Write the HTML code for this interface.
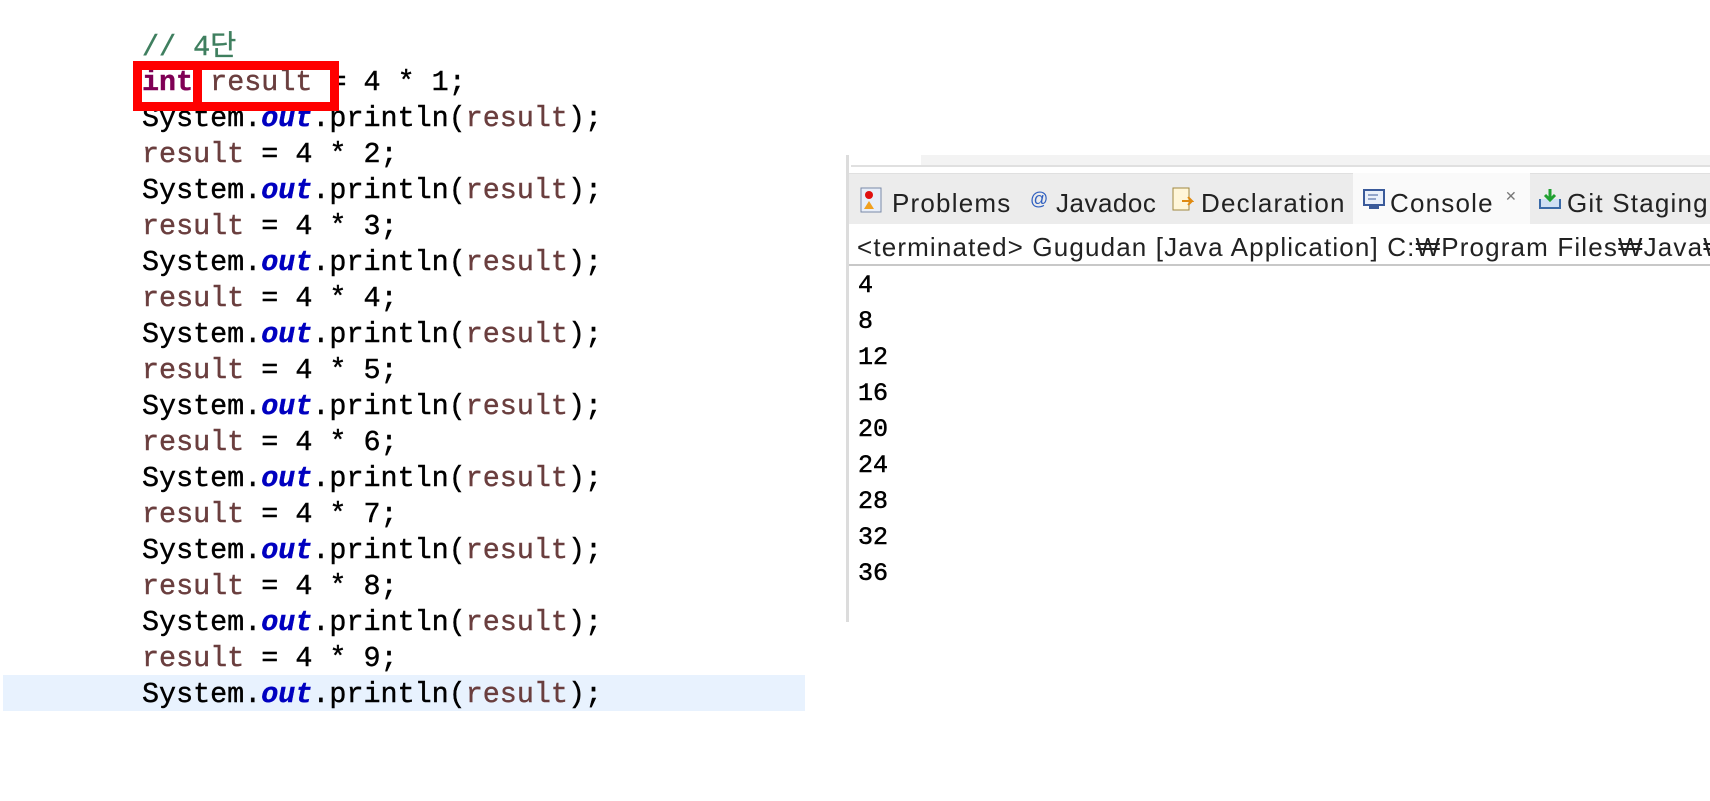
<!DOCTYPE html>
<html><head><meta charset="utf-8"><style>
html,body{margin:0;padding:0;width:1710px;height:801px;background:#fff;overflow:hidden;position:relative}
.code{position:absolute;left:142px;font-family:"Liberation Mono","Noto Sans CJK KR",monospace;font-size:28.4px;line-height:36px;white-space:pre;color:#000;-webkit-text-stroke:0.4px}
.l{position:absolute;left:0;white-space:pre;height:36px}
.c{color:#3f7f5f}.k{color:#7f0055;font-weight:bold}.v{color:#6a3e3e}.o{color:#0000c0;font-style:italic;font-weight:bold}
.hl{position:absolute;left:3px;top:675px;width:802px;height:36px;background:#e8f2fe}
.box{position:absolute;border:9px solid #ff0000;box-sizing:border-box}
.ui{font-family:"Liberation Sans","Noto Sans CJK KR",sans-serif;position:absolute;white-space:pre;color:#222}
.tab{font-size:26px;letter-spacing:1.2px}
</style></head><body>
<div class="hl"></div>
<div class="code" style="top:0">
<div class="l" style="top:30px"><span class="c">// 4단</span></div>
<div class="l" style="top:65px"><span class="k">int</span> <span class="v">result</span> = 4 * 1;</div>
<div class="l" style="top:101px">System.<span class="o">out</span>.println(<span class="v">result</span>);</div>
<div class="l" style="top:137px"><span class="v">result</span> = 4 * 2;</div>
<div class="l" style="top:173px">System.<span class="o">out</span>.println(<span class="v">result</span>);</div>
<div class="l" style="top:209px"><span class="v">result</span> = 4 * 3;</div>
<div class="l" style="top:245px">System.<span class="o">out</span>.println(<span class="v">result</span>);</div>
<div class="l" style="top:281px"><span class="v">result</span> = 4 * 4;</div>
<div class="l" style="top:317px">System.<span class="o">out</span>.println(<span class="v">result</span>);</div>
<div class="l" style="top:353px"><span class="v">result</span> = 4 * 5;</div>
<div class="l" style="top:389px">System.<span class="o">out</span>.println(<span class="v">result</span>);</div>
<div class="l" style="top:425px"><span class="v">result</span> = 4 * 6;</div>
<div class="l" style="top:461px">System.<span class="o">out</span>.println(<span class="v">result</span>);</div>
<div class="l" style="top:497px"><span class="v">result</span> = 4 * 7;</div>
<div class="l" style="top:533px">System.<span class="o">out</span>.println(<span class="v">result</span>);</div>
<div class="l" style="top:569px"><span class="v">result</span> = 4 * 8;</div>
<div class="l" style="top:605px">System.<span class="o">out</span>.println(<span class="v">result</span>);</div>
<div class="l" style="top:641px"><span class="v">result</span> = 4 * 9;</div>
<div class="l" style="top:677px">System.<span class="o">out</span>.println(<span class="v">result</span>);</div>
</div>
<div class="box" style="left:133px;top:61px;width:69px;height:50px"></div>
<div class="box" style="left:193px;top:61px;width:146px;height:50px"></div>

<div style="position:absolute;left:846px;top:155px;width:3px;height:467px;background:#dcdcdc"></div>
<div style="position:absolute;left:851px;top:155px;width:859px;height:10px;background:#f3f3f3;border-bottom:2px solid #e0e0e0"></div>
<div style="position:absolute;left:851px;top:155px;width:70px;height:10px;background:#fff"></div>
<div style="position:absolute;left:849px;top:173px;width:861px;height:51px;background:#ececec;border-top:1px solid #e0e0e0"></div>
<div style="position:absolute;left:1353px;top:173px;width:177px;height:51px;background:#fafafa"></div>
<div style="position:absolute;left:849px;top:224px;width:861px;height:40px;background:#fff;border-bottom:2px solid #c8c8c8"></div>
<svg style="position:absolute;left:860px;top:187px" width="22" height="26"><rect x="1" y="1" width="20" height="24" fill="#e8eef8" stroke="#7a8aa8"/><circle cx="9" cy="8" r="4" fill="#e01010"/><path d="M4 22 L9 14 L14 22Z" fill="#f0a020"/></svg>
<div class="ui" style="left:1030px;top:189px;font-size:18px;color:#3060c0">@</div>
<svg style="position:absolute;left:1172px;top:187px" width="22" height="26"><rect x="1" y="1" width="16" height="22" fill="#fff6d8" stroke="#a08840"/><path d="M10 14 h10 l-4 -4 M20 14 l-4 4" stroke="#e08a10" stroke-width="2" fill="none"/></svg>
<svg style="position:absolute;left:1363px;top:189px" width="22" height="22"><rect x="1" y="1" width="20" height="15" fill="#eaf0fa" stroke="#3a5a9a" stroke-width="2"/><path d="M5 6h10M5 10h8" stroke="#3a5a9a"/><rect x="6" y="17" width="10" height="3" fill="#3a5a9a"/></svg>
<div class="ui" style="left:1505px;top:188px;font-size:14px;color:#777">✕</div>
<svg style="position:absolute;left:1538px;top:187px" width="24" height="24"><path d="M2 12 v9 h20 v-9" stroke="#3a6aa8" stroke-width="2" fill="#cfe0f4"/><path d="M12 2 v11 M7 8 l5 5 l5 -5" stroke="#20a030" stroke-width="3" fill="none"/></svg>
<div class="ui tab" style="left:892px;top:188px">Problems</div>
<div class="ui tab" style="left:1056px;top:188px;letter-spacing:0.5px">Javadoc</div>
<div class="ui tab" style="left:1201px;top:188px">Declaration</div>
<div class="ui tab" style="left:1390px;top:188px">Console</div>
<div class="ui tab" style="left:1567px;top:188px">Git Staging</div>
<div class="ui" style="left:857px;top:232px;font-size:26px;letter-spacing:1.15px">&lt;terminated&gt; Gugudan [Java Application] C:₩Program Files₩Java₩j</div>
<div style="position:absolute;left:858px;top:268px;font-family:'Liberation Mono',monospace;font-size:25px;line-height:36px;white-space:pre;color:#000;-webkit-text-stroke:0.5px">4
8
12
16
20
24
28
32
36</div>
</body></html>
